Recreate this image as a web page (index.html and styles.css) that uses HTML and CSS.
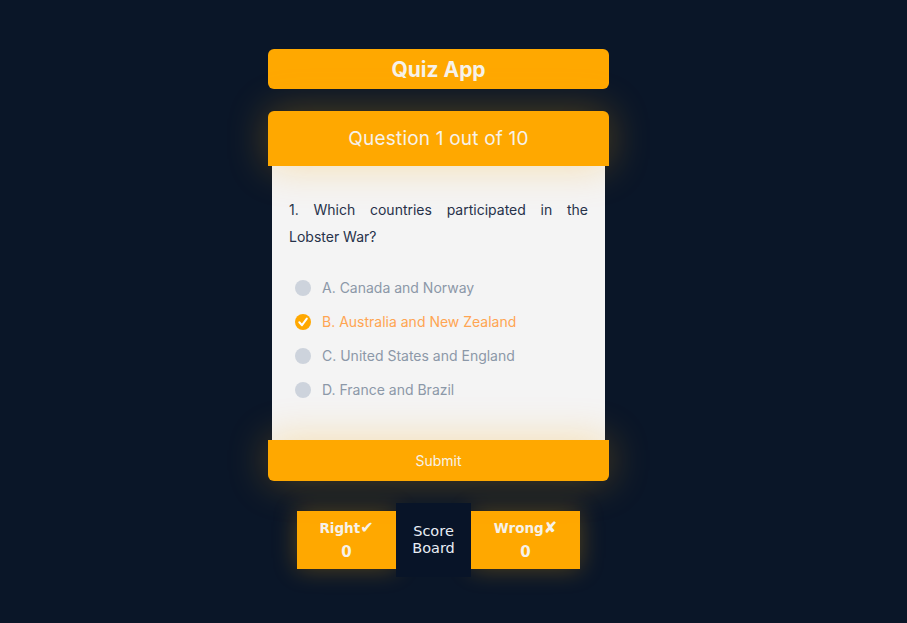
FILE: index.html
```html
<!DOCTYPE html>
<html lang="en">
<head>
<meta charset="utf-8">
<title>Quiz App</title>
<link rel="stylesheet" href="styles.css">
</head>
<body>
<main class="app">
  <h1 class="title">Quiz App</h1>
  <section class="card">
    <div class="qhead">Question 1 out of 10</div>
    <div class="qbody">
      <p class="question">1. Which countries participated in the Lobster War?</p>
      <ul class="options">
        <li class="option"><span class="radio"></span><span>A. Canada and Norway</span></li>
        <li class="option selected"><span class="radio"><svg viewBox="0 0 16 16" width="16" height="16"><circle cx="8" cy="8" r="8" fill="#ffa800"/><path d="M4.3 8.3 L7 11.2 L11.8 4.6" fill="none" stroke="#fff" stroke-width="2" stroke-linecap="round" stroke-linejoin="round"/></svg></span><span>B. Australia and New Zealand</span></li>
        <li class="option"><span class="radio"></span><span>C. United States and England</span></li>
        <li class="option"><span class="radio"></span><span>D. France and Brazil</span></li>
      </ul>
    </div>
    <button class="submit">Submit</button>
  </section>
  <section class="score">
    <div class="box"><div class="label">Right<span class="mark">✔</span></div><div class="num">0</div></div>
    <div class="board">Score<br>Board</div>
    <div class="box wrong"><div class="label">Wrong<span class="mark">✘</span></div><div class="num">0</div></div>
  </section>
</main>
</body>
</html>
```
FILE: styles.css
```css
* { box-sizing: border-box; }
html, body { margin: 0; padding: 0; }
body {
  background: #0a1628;
  font-family: Inter, "DejaVu Sans", sans-serif;
  min-height: 623px;
}
.app {
  width: 341px;
  margin: 49px 0 0 268px;
}
.title {
  margin: 0 0 22px;
  height: 40px;
  background: #ffa800;
  border-radius: 6px;
  color: #f6f2ea;
  font-size: 21px;
  font-weight: 700;
  display: flex;
  align-items: center;
  justify-content: center;
}
.card { display: flex; flex-direction: column; }
.qhead {
  position: relative;
  height: 55px;
  background: #ffa800;
  border-radius: 6px 6px 0 0;
  color: #f6f2ea;
  font-size: 19px;
  letter-spacing: 0.2px;
  display: flex;
  align-items: center;
  justify-content: center;
  box-shadow: 0 0 40px rgba(255, 168, 0, 0.3);
}
.qbody {
  margin: 0 4px;
  height: 274px;
  background: #f4f4f4;
  padding: 30px 17px 0;
}
.question {
  margin: 0;
  font-size: 14px;
  line-height: 27px;
  color: #27324a;
  text-align: justify;
}
.options {
  list-style: none;
  margin: 21px 0 0;
  padding: 0;
}
.option {
  height: 34px;
  display: flex;
  align-items: center;
  gap: 11px;
  padding-left: 6px;
  font-size: 14px;
  line-height: 16px;
  color: #8c98a8;
}
.radio {
  width: 16px;
  height: 16px;
  border-radius: 50%;
  background: #cdd3dc;
  display: block;
}
.radio svg { display: block; }
.selected .radio { background: none; }
.selected { color: #ffa552; }
.submit {
  position: relative;
  height: 41px;
  border: 0;
  background: #ffa800;
  border-radius: 0 0 6px 6px;
  color: #f6f2ea;
  font-family: inherit;
  font-size: 14px;
  box-shadow: 0 0 40px rgba(255, 168, 0, 0.3);
}
.score {
  margin-top: 22px;
  display: flex;
  align-items: center;
  justify-content: center;
}
.box {
  width: 99px;
  height: 58px;
  background: #ffa800;
  color: #f6f2ea;
  display: flex;
  flex-direction: column;
  align-items: center;
  justify-content: center;
  gap: 8px;
  font-family: "DejaVu Sans", sans-serif;
  font-weight: 700;
  box-shadow: 0 0 24px rgba(255, 168, 0, 0.3);
}
.box.wrong { width: 109px; }
.label { font-size: 13.5px; line-height: 16px; }
.mark { font-size: 16px; }
.num { font-size: 15px; line-height: 16px; }
.board {
  position: relative;
  width: 75px;
  height: 74px;
  background: #081428;
  color: #e8eef6;
  font-family: "DejaVu Sans", sans-serif;
  font-size: 14.5px;
  line-height: 17px;
  display: flex;
  align-items: center;
  justify-content: center;
  text-align: center;
}
```
